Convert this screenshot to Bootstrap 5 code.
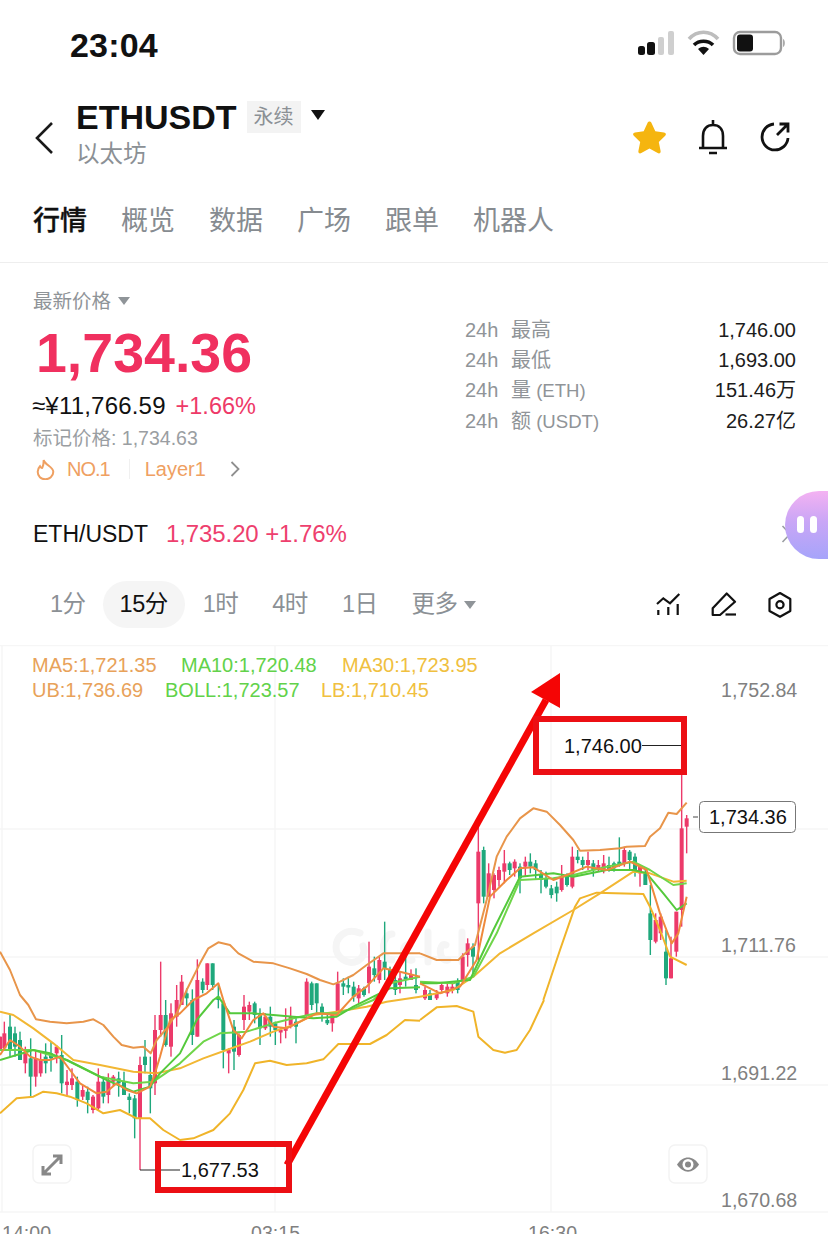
<!DOCTYPE html>
<html lang="zh-CN">
<head>
  <meta charset="UTF-8" />
  <meta name="viewport" content="width=device-width, initial-scale=1" />
  <title>ETHUSDT 永续</title>
  <link href="https://cdn.jsdelivr.net/npm/bootstrap@5.3.2/dist/css/bootstrap.min.css" rel="stylesheet" />
  <style>
    html, body { margin: 0; background: #fff; }
    body {
      width: 828px;
      height: 1234px;
      overflow: hidden;
      font-family: "Liberation Sans", "Noto Sans CJK SC", sans-serif;
      color: #111;
    }
    .status-bar { height: 90px; padding: 28px 43px 0 70px; }
    .status-time { font-size: 34px; font-weight: 700; line-height: 34px; letter-spacing: .2px; }
    .head-bar { height: 100px; padding: 10px 37px 0 35px; }
    .head-back { width: 41px; margin-top: 22px; }
    .head-name { font-size: 34px; font-weight: 700; line-height: 34px; }
    .head-sub { font-size: 23.5px; line-height: 30px; color: #8b9095; margin-top: 5px; }
    .head-tag {
      background: #f3f3f3; color: #8b9095; font-size: 20px; line-height: 32px;
      padding: 0 7px; margin: 1px 10px 0; height: 32px;
    }
    .head-tools { gap: 31px; margin-top: 20px; }
    .tab-bar { height: 73px; padding: 14px 0 0 33px; gap: 34px; border-bottom: 1px solid #eeeeee; }
    .tab-item { font-size: 27px; line-height: 34px; color: #868b90; }
    .tab-item.is-on { color: #111; font-weight: 500; -webkit-text-stroke: .3px #111; }
    .stats-wrap { padding: 24px 32px 0 33px; height: 222px; }
    .price-col { width: 432px; }
    .muted-label { font-size: 19.5px; line-height: 28px; color: #8f9498; }
    .tri-down { display: inline-block; border: 6px solid transparent; border-top: 8px solid #8f9498; border-bottom: 0; margin-left: 7px; vertical-align: 3px; }
    .price-big { font-size: 55.5px; font-weight: 700; line-height: 62px; color: #f0305f; margin: 7px 0 0 3px; }
    .price-cny { font-size: 24px; line-height: 26px; margin-top: 9px; margin-left: -1px; letter-spacing: .2px; }
    .up-pct { color: #ee3a68; margin-left: 3px; font-size: 23.5px; letter-spacing: 0; }
    .mark-line { font-size: 19.5px; line-height: 30px; color: #9a9ea2; margin-top: 4px; }
    .tag-line { font-size: 20px; line-height: 32px; color: #efa062; margin: 0 0 0 3px; }
    .tag-no { letter-spacing: -1px; }
    .tag-sep { width: 1px; height: 20px; background: #f0f0f0; margin: 0 15px 0 19px; }
    .stat-col { width: 331px; padding-top: 28px; }
    .stat-row { font-size: 20px; line-height: 30px; }
    .stat-key { color: #909498; }
    .stat-h { display: inline-block; width: 46px; }
    .stat-par { font-size: 18.6px; }
    .stat-val { color: #1c1c1c; }
    .spot-row { height: 40px; margin: 29px 0 0; padding-left: 33px; font-size: 23px; line-height: 40px; }
    .spot-up { color: #ee3f6e; margin-left: 18px; font-size: 24px; letter-spacing: -.1px; }
    .assist-blob {
      position: absolute; right: 0; top: 491px; width: 43px; height: 68px;
      border-radius: 34px 0 0 34px;
      background: linear-gradient(180deg, #f4b2f2 0%, #c9a6f6 45%, #a6a4fa 100%);
    }
    .assist-eye { position: absolute; top: 25px; width: 7px; height: 17px; border-radius: 4px; background: #fff; }
    .assist-arrow { position: absolute; left: 781px; top: 525px; }
    .time-row { height: 47px; margin-top: 27px; padding: 0 36px 0 33px; font-size: 23.5px; letter-spacing: -.5px; color: #8b9095; }
    .time-item { line-height: 47px; padding: 0 17px; }
    .time-item.is-on { background: #f5f5f5; color: #111; border-radius: 24px; margin-right: 1px; }
    .time-icons { gap: 30px; }
    .chart-wrap { position: relative; width: 828px; height: 589px; margin-top: 17px; overflow: hidden; }
    .chart-wrap svg { display: block; }
    .chart-text { font-family: "Liberation Sans", sans-serif; font-size: 20px; }
    .axis-text { font-size: 19.6px; }
  </style>
</head>
<body>

<div class="status-bar d-flex justify-content-between">
  <div class="status-time">23:04</div>
  <svg width="150" height="30" viewBox="635 30 150 30">
    <rect x="638" y="48" width="7" height="9" rx="2.500" fill="#111"/>
    <rect x="647" y="44" width="8" height="13" rx="2.500" fill="#111"/>
    <rect x="658" y="39" width="6" height="18" rx="2" fill="#cfcfcf"/>
    <rect x="668" y="33" width="6" height="24" rx="2" fill="#cfcfcf"/>
    <path d="M689 41 C697 32 710 32 718 41" fill="none" stroke="#bdbdbd" stroke-width="3.600"/>
    <path d="M694 47 C699 42 708 42 713 47" fill="none" stroke="#111" stroke-width="3.600"/>
    <path d="M698 51 C702 48 705 48 709 51 L703.500 57 Z" fill="#111"/>
    <rect x="734" y="34" width="47" height="22" rx="6" fill="none" stroke="#9c9c9c" stroke-width="2.400"/>
    <rect x="737" y="36.500" width="16" height="17" rx="3" fill="#111"/>
    <path d="M783 41 C785.500 42 785.500 48 783 49 Z" fill="#a9a9a9"/>
  </svg>
</div>

<div class="head-bar d-flex justify-content-between">
  <div class="d-flex">
    <svg class="head-back" width="41" height="32" viewBox="0 0 41 32"><path d="M17 1 L2 16 L17 31" fill="none" stroke="#1a1a1a" stroke-width="2.600"/></svg>
    <div>
      <div class="d-flex align-items-start">
        <span class="head-name">ETHUSDT</span>
        <span class="head-tag">永续</span>
        <svg class="mt-2" width="14" height="12" viewBox="0 0 14 12"><path d="M0 2 H14 L7 12 Z" fill="#111"/></svg>
      </div>
      <div class="head-sub">以太坊</div>
    </div>
  </div>
  <div class="head-tools d-flex align-items-start">
    <svg width="35" height="35" viewBox="0 0 35 35"><path d="M17.500 1.500 C18.500 1.500 19 2 19.500 3 L23.300 11.300 L32 12.400 C34 12.700 34.500 14.400 33.200 15.700 L26.800 21.900 L28.600 31 C29 33 27.400 34 25.700 33.100 L17.500 28.500 L9.300 33.100 C7.600 34 6 33 6.400 31 L8.200 21.900 L1.800 15.700 C.5 14.400 1 12.700 3 12.400 L11.700 11.300 L15.500 3 C16 2 16.500 1.500 17.500 1.500 Z" fill="#f5b50f"/></svg>
    <svg width="30" height="35" viewBox="0 0 30 35"><path d="M15 0 V5 M5 28 V16 C5 9 9 5 15 5 C21 5 25 9 25 16 V28 M1 28 H29 M11 33 H19" fill="none" stroke="#111" stroke-width="2.600"/></svg>
    <svg width="32" height="33" viewBox="760 121 32 33"><path d="M775 125 A13 13 0 1 0 789 139" fill="none" stroke="#111" stroke-width="2.800"/><path d="M778 136 L788 126 M780.500 125 H789 V133.500" fill="none" stroke="#111" stroke-width="2.800"/></svg>
  </div>
</div>

<div class="tab-bar d-flex">
  <div class="tab-item is-on">行情</div>
  <div class="tab-item">概览</div>
  <div class="tab-item">数据</div>
  <div class="tab-item">广场</div>
  <div class="tab-item">跟单</div>
  <div class="tab-item">机器人</div>
</div>

<div class="stats-wrap d-flex">
  <div class="price-col">
    <div class="muted-label">最新价格<span class="tri-down"></span></div>
    <div class="price-big">1,734.36</div>
    <div class="price-cny">≈¥11,766.59 <span class="up-pct">+1.66%</span></div>
    <div class="mark-line">标记价格: 1,734.63</div>
    <div class="tag-line d-flex align-items-center">
      <svg width="19" height="22" viewBox="15 7 19 22"><path d="M22.700 9 C23.300 13.500 32.300 16 32.300 20.700 C32.300 25.300 28.300 28.300 24.300 28.300 C20 28.300 16.700 25.300 16.700 20.700 C16.700 18.300 17.700 16.700 19 15.300 C19.700 16.700 20.700 17.300 21.300 16.700 C22.300 15 22.700 12.300 22.700 9 Z" fill="none" stroke="#efa062" stroke-width="2"/></svg>
      <span class="tag-no ms-2 ps-1">NO.1</span><span class="tag-sep"></span><span>Layer1</span>
      <svg class="ms-4" width="10" height="16" viewBox="0 0 10 16"><path d="M1.500 1 L8.500 8 L1.500 15" fill="none" stroke="#8f8f8f" stroke-width="1.800"/></svg>
    </div>
  </div>
  <div class="stat-col">
    <div class="stat-row d-flex justify-content-between"><span class="stat-key"><span class="stat-h">24h</span>最高</span><span class="stat-val">1,746.00</span></div>
    <div class="stat-row d-flex justify-content-between"><span class="stat-key"><span class="stat-h">24h</span>最低</span><span class="stat-val">1,693.00</span></div>
    <div class="stat-row d-flex justify-content-between"><span class="stat-key"><span class="stat-h">24h</span>量<span class="stat-par"> (ETH)</span></span><span class="stat-val">151.46万</span></div>
    <div class="stat-row d-flex justify-content-between"><span class="stat-key"><span class="stat-h">24h</span>额<span class="stat-par"> (USDT)</span></span><span class="stat-val">26.27亿</span></div>
  </div>
</div>

<div class="spot-row">ETH/USDT<span class="spot-up">1,735.20 +1.76%</span></div>
<svg class="assist-arrow" width="11" height="18" viewBox="0 0 11 18"><path d="M1.500 1 L9 9 L1.500 17" fill="none" stroke="#9a9ea2" stroke-width="1.600"/></svg>
<div class="assist-blob"><span class="assist-eye" style="left:12px"></span><span class="assist-eye" style="left:25px"></span></div>

<div class="time-row d-flex justify-content-between align-items-center">
  <div class="d-flex align-items-center">
    <span class="time-item">1分</span>
    <span class="time-item is-on">15分</span>
    <span class="time-item">1时</span>
    <span class="time-item">4时</span>
    <span class="time-item">1日</span>
    <span class="time-item">更多<span class="tri-down"></span></span>
  </div>
  <div class="time-icons d-flex align-items-center">
    <svg width="25" height="24" viewBox="16 13 25 24"><path d="M17 24 L23.300 18.300 L30 23.300 L39.300 14" fill="none" stroke="#111" stroke-width="2.200"/><path d="M18.300 30 V35 M28.300 27 V35 M37.700 24 V35" fill="none" stroke="#111" stroke-width="2.200"/></svg>
    <svg width="27" height="25" viewBox="71 12 27 25"><path d="M72.700 28.300 L86.700 13.500 L95 21.700 L80 35 H72.700 Z" fill="none" stroke="#111" stroke-width="2.200" stroke-linejoin="round"/><path d="M85.500 34.500 H96" fill="none" stroke="#111" stroke-width="2.200"/></svg>
    <svg width="24" height="28" viewBox="128 11 24 28"><path d="M140 13 L150.300 19 V31 L140 36.800 L129.500 31 V19 Z" fill="none" stroke="#111" stroke-width="2.200" stroke-linejoin="round"/><circle cx="140" cy="24.800" r="3.600" fill="none" stroke="#111" stroke-width="2.200"/></svg>
  </div>
</div>

<div class="chart-wrap">
  <svg id="chart" width="828" height="589" viewBox="0 645 828 589">
    <g stroke="#f6f6f6" stroke-width="1.500" fill="none">
      <path d="M0 645.500 H828 M0 829 H828 M0 957 H828 M0 1085 H828 M0 1212 H828 M2 645 V1212 M275 645 V1212 M551 645 V1212"/>
    </g>
    <g id="watermark" fill="none" stroke="#f5f5f5" stroke-width="7" stroke-linecap="round">
      <path d="M360 933 C345 927 336 938 336 947 C336 957 346 964 355 962 C362 960 366 953 363 946"/>
      <path d="M392 934 C382 934 379 958 392 960 M410 945 C400 942 402 962 412 960 M428 932 V962 M446 945 C438 942 438 962 448 960 M462 932 V962"/>
    </g>
    <g id="candles"></g>
    <g id="lines" fill="none" stroke-linejoin="round"></g>

    <g class="chart-text">
      <text x="32" y="672" fill="#e8a25a">MA5:1,721.35</text>
      <text x="181" y="672" fill="#62d24a">MA10:1,720.48</text>
      <text x="342" y="672" fill="#f0c040">MA30:1,723.95</text>
      <text x="32" y="697" fill="#e8a25a">UB:1,736.69</text>
      <text x="165" y="697" fill="#62d24a">BOLL:1,723.57</text>
      <text x="321" y="697" fill="#f0c040">LB:1,710.45</text>

      <g fill="#808080" class="axis-text">
        <text x="721" y="697">1,752.84</text>
        <text x="721" y="952">1,711.76</text>
        <text x="721" y="1080">1,691.22</text>
        <text x="721" y="1207">1,670.68</text>
        <text x="2" y="1240">14:00</text>
        <text x="251" y="1240">03:15</text>
        <text x="528" y="1240">16:30</text>
      </g>
    </g>

    <path d="M693 817 H698" stroke="#666" stroke-width="1.200"/>
    <rect x="699.500" y="801.500" width="96" height="31" rx="4" fill="#fff" stroke="#777" stroke-width="1"/>
    <text class="chart-text" x="709" y="824" fill="#111">1,734.36</text>

    <g fill="#fff" stroke="#f3f3f3" stroke-width="1.500">
      <rect x="33" y="1145" width="38" height="38" rx="6"/>
      <rect x="669" y="1145" width="38" height="38" rx="6"/>
    </g>
    <path d="M44 1173 L60 1157 M53 1156 H61 V1164 M43 1166 V1174 H51" fill="none" stroke="#888" stroke-width="3"/>
    <path d="M677 1164.500 C683 1155 693 1155 699 1164.500 C693 1174 683 1174 677 1164.500 Z" fill="#888"/>
    <circle cx="688" cy="1164.500" r="5.500" fill="#fff"/>
    <circle cx="688" cy="1164.500" r="3" fill="#888"/>

    <path d="M140 1170 H180 M642 745.500 H682" stroke="#222" stroke-width="1.200"/>
    <text class="chart-text" x="181" y="1177" fill="#111">1,677.53</text>
    <text class="chart-text" x="564" y="753" fill="#111">1,746.00</text>

    <path d="M287 1165 L546 700" stroke="#f50505" stroke-width="7" fill="none"/>
    <path d="M560 673 V708 L531 692 Z" fill="#f50505"/>
    <rect x="158" y="1144" width="131" height="46" fill="none" stroke="#ec0f14" stroke-width="6"/>
    <rect x="536" y="719" width="148" height="53" fill="none" stroke="#ec0f14" stroke-width="6"/>
  </svg>
</div>

<script>
// traced from the reference, left part (a) and right part (b) use their own origin
const ptA = (x, y) => [x / 3, 900 + y / 3];
const ptB = (x, y) => [420 + x / 3, 640 + y / 3];
const ptC = (x, y) => [420 + x / 3, 1000 + y / 3];

const seriesA = {
  ub: [[0,155],[30,210],[60,285],[85,315],[108,358],[150,365],[200,370],[250,365],[280,358],[310,375],[340,410],[365,435],[400,443],[430,440],[452,460],[470,420],[500,385],[530,340],[560,270],[600,190],[625,145],[655,127],[690,135],[715,160],[760,185],[820,190],[870,205],[920,222],[960,240],[1000,253],[1020,245],[1060,225],[1100,195],[1150,160],[1260,160]],
  ma5: [[0,465],[30,420],[60,440],[90,470],[120,480],[150,480],[180,470],[210,510],[240,550],[290,580],[320,575],[350,550],[380,570],[410,580],[450,560],[465,520],[480,470],[510,360],[540,340],[580,300],[620,280],[655,250],[670,300],[700,390],[725,415],[760,360],[790,340],[820,380],[860,385],[900,365],[950,340],[1010,345],[1060,290],[1100,260],[1150,205],[1200,215],[1260,230]],
  ma10: [[0,480],[50,465],[100,450],[150,460],[200,480],[260,510],[320,540],[400,575],[450,560],[480,520],[540,460],[590,360],[640,300],[655,290],[690,340],[760,340],[820,345],[880,350],[940,355],[1010,350],[1060,320],[1120,290],[1170,265],[1260,262]],
  boll: [[0,450],[100,450],[200,480],[300,530],[400,550],[460,545],[540,490],[610,425],[660,400],[740,395],[820,370],[880,355],[950,340],[1010,340],[1060,325],[1120,300],[1170,250],[1260,230]],
  ma30: [[0,335],[40,345],[100,385],[160,430],[220,480],[300,495],[400,515],[470,520],[540,505],[610,475],[680,450],[750,425],[820,395],[880,375],[940,345],[1010,335],[1100,320],[1160,305],[1260,290]],
  lb: [[0,640],[50,595],[100,590],[130,575],[170,580],[210,590],[260,610],[310,640],[360,630],[410,655],[450,655],[490,690],[540,720],[580,715],[640,690],[690,640],[730,570],[765,490],[810,482],[860,495],[920,490],[970,478],[1015,432],[1060,432],[1110,432],[1160,405],[1215,360],[1260,362]]
};
const seriesB = {
  ub: [[0,940],[50,960],[115,960],[130,945],[165,915],[200,780],[230,650],[260,590],[300,535],[340,505],[380,515],[420,555],[460,600],[480,632],[540,630],[600,625],[620,620],[675,618],[690,590],[720,565],[745,518],[770,522],[800,488]],
  ma5: [[0,1030],[60,1060],[120,1040],[170,960],[210,770],[260,720],[300,685],[340,682],[400,720],[440,705],[500,680],[560,690],[630,665],[680,690],[720,820],[755,910],[775,880],[800,770]],
  ma10: [[0,1030],[50,1030],[150,1020],[220,870],[300,710],[400,700],[460,710],[560,690],[640,690],[680,700],[730,760],[770,810],[800,790]],
  boll: [[0,1025],[100,1030],[160,1010],[230,880],[300,720],[400,715],[460,705],[560,680],[640,665],[690,690],[760,735],[800,730]],
  ma30: [[0,1070],[100,1050],[160,1010],[240,940],[340,880],[460,810],[540,760],[640,695],[690,700],[760,725],[800,722]],
  lb: [[370,1080],[420,930],[465,800],[480,775],[530,758],[670,762],[690,800],[720,870],[750,950],[800,975]]
};
const lbC = [[0,60],[50,22],[110,18],[160,35],[175,110],[220,150],[255,158],[290,150],[330,90],[372,0]];

// x, wick top, wick bottom, body top, body bottom, colour
const candlesA = [
  [0,410,450,410,450,'r'],[13,365,450,400,445,'r'],[30,345,470,380,450,'g'],[45,380,470,400,440,'g'],[60,395,480,420,480,'g'],
  [76,440,520,460,490,'r'],[92,415,590,475,530,'g'],[107,450,560,475,530,'r'],[122,455,530,480,520,'r'],[137,430,520,470,490,'g'],
  [153,425,515,460,475,'g'],[170,435,490,440,460,'r'],[185,405,580,465,550,'g'],[201,510,590,545,555,'r'],[216,505,570,535,555,'r'],
  [232,530,620,545,600,'g'],[248,555,600,570,590,'r'],[263,560,640,575,600,'g'],[279,585,640,590,630,'r'],[295,505,630,545,625,'r'],
  [310,530,610,545,590,'g'],[325,520,610,540,585,'r'],[340,525,560,530,545,'r'],[356,515,590,535,550,'g'],[372,515,585,545,585,'g'],
  [388,580,640,590,600,'g'],[404,585,715,595,655,'g'],[420,470,810,495,655,'r'],[435,420,520,470,495,'g'],[451,470,640,525,565,'g'],
  [465,345,585,390,550,'r'],[482,185,410,345,390,'r'],[497,300,440,345,435,'g'],[513,310,470,340,440,'r'],[530,255,380,300,350,'r'],
  [545,225,315,245,315,'r'],[560,265,320,280,295,'g'],[577,268,435,300,405,'g'],[592,178,410,240,410,'r'],[608,235,280,245,270,'g'],
  [622,190,270,190,255,'r'],[638,190,270,190,255,'g'],[655,250,325,290,300,'g'],[670,300,505,310,450,'g'],[686,445,520,450,460,'r'],
  [702,360,510,380,455,'g'],[717,400,470,405,465,'r'],[732,285,390,320,360,'r'],[748,305,360,315,335,'r'],[764,305,370,310,345,'g'],
  [780,325,435,345,385,'g'],[796,340,390,350,385,'r'],[811,320,410,350,380,'g'],[826,365,435,370,390,'g'],[842,385,430,395,390,'r'],
  [857,325,415,385,390,'r'],[872,320,385,350,375,'r'],[888,350,430,365,380,'g'],[920,235,350,245,345,'r'],[935,245,330,250,315,'g'],
  [950,250,345,250,310,'g'],[966,310,365,320,340,'g'],[982,345,375,360,370,'g'],[997,340,395,345,370,'r'],[1013,215,350,250,340,'r'],
  [1030,235,285,260,250,'g'],[1045,230,280,255,260,'g'],[1061,245,305,260,290,'g'],[1076,255,310,265,295,'r'],[1092,260,290,265,285,'g'],
  [1107,125,280,200,250,'r'],[1123,170,245,205,225,'g'],[1138,170,250,180,240,'r'],[1154,65,240,185,205,'g'],[1170,200,245,210,240,'g'],
  [1186,225,285,240,270,'g'],[1200,215,280,235,255,'r'],[1217,170,260,235,230,'g'],[1233,208,240,225,240,'r'],[1248,205,280,255,270,'g']
];
const candlesB = [
  [15,1040,1080,1050,1075,'r'],[30,1050,1080,1060,1080,'g'],[50,1050,1080,1060,1075,'r'],[65,1030,1060,1035,1050,'r'],[82,1030,1070,1040,1060,'r'],
  [97,1030,1060,1040,1050,'r'],[113,1015,1060,1025,1050,'g'],[128,940,1030,950,1020,'r'],[143,895,980,910,945,'r'],[159,910,1000,920,950,'g'],
  [175,560,960,635,790,'r'],[191,620,790,630,770,'g'],[206,670,770,700,770,'r'],[222,700,775,705,750,'r'],[237,680,740,690,720,'r'],
  [253,630,730,670,695,'r'],[269,665,705,670,690,'g'],[284,658,710,665,685,'r'],[300,670,760,680,715,'g'],[316,650,710,665,680,'r'],
  [331,640,700,665,680,'g'],[347,660,720,670,690,'g'],[363,690,760,705,720,'g'],[378,695,745,715,740,'g'],[394,735,775,745,765,'g'],
  [410,725,785,740,760,'g'],[425,675,755,710,750,'r'],[441,700,740,705,735,'g'],[457,620,745,650,740,'r'],[473,630,670,650,660,'g'],
  [488,650,690,660,675,'g'],[504,635,690,660,675,'r'],[520,660,710,670,690,'g'],[535,660,695,675,690,'r'],[551,645,700,670,690,'r'],
  [567,650,695,675,690,'g'],[582,665,695,670,685,'g'],[598,592,680,670,665,'g'],[613,620,680,630,670,'r'],[629,630,690,635,660,'g'],
  [645,640,710,650,690,'g'],[660,675,740,680,700,'r'],[676,690,735,700,735,'g'],[691,735,945,820,900,'g'],[707,820,910,840,905,'r'],
  [722,820,900,830,880,'r'],[738,870,1035,935,1015,'g'],[753,890,1015,955,1015,'r'],[769,815,950,815,935,'r'],[785,316,860,565,810,'r'],[800,525,640,535,560,'r']
];

const NS = 'http://www.w3.org/2000/svg';
const candleColors = { r: '#ec3a6a', g: '#1fa87c' };
const candleLayer = document.getElementById('candles');
const lineLayer = document.getElementById('lines');

function addCandle(row, toPage) {
  const [zx, wt, wb, bt, bb, c] = row;
  const [x, wickTop] = toPage(zx, wt);
  const wickBot = toPage(zx, wb)[1];
  const a = toPage(zx, Math.min(bt, bb))[1];
  const b = toPage(zx, Math.max(bt, bb))[1];
  const wick = document.createElementNS(NS, 'rect');
  wick.setAttribute('x', x - 0.7);
  wick.setAttribute('y', wickTop);
  wick.setAttribute('width', 1.4);
  wick.setAttribute('height', wickBot - wickTop);
  wick.setAttribute('fill', candleColors[c]);
  candleLayer.appendChild(wick);
  const body = document.createElementNS(NS, 'rect');
  body.setAttribute('x', x - 2);
  body.setAttribute('y', a);
  body.setAttribute('width', 4);
  body.setAttribute('height', Math.max(b - a, 2.5));
  body.setAttribute('fill', candleColors[c]);
  candleLayer.appendChild(body);
}

function addLine(points, color, width) {
  const line = document.createElementNS(NS, 'polyline');
  line.setAttribute('points', points.map(p => p.join(',')).join(' '));
  line.setAttribute('stroke', color);
  line.setAttribute('stroke-width', width);
  lineLayer.appendChild(line);
}

candlesA.forEach(c => addCandle(c, ptA));
candlesB.forEach(c => addCandle(c, ptB));

const lineStyle = {
  lb: ['#f0b429', 2], ma30: ['#f2b733', 2], ub: ['#e8954a', 2],
  boll: ['#6fd54a', 2], ma10: ['#54c93c', 2], ma5: ['#ef8a3c', 2]
};
Object.keys(lineStyle).forEach(k => {
  const [color, w] = lineStyle[k];
  addLine(seriesA[k].map(p => ptA(p[0], p[1])), color, w);
  addLine(seriesB[k].map(p => ptB(p[0], p[1])), color, w);
});
addLine(lbC.map(p => ptC(p[0], p[1])), lineStyle.lb[0], lineStyle.lb[1]);
</script>
<script src="https://cdn.jsdelivr.net/npm/bootstrap@5.3.2/dist/js/bootstrap.bundle.min.js"></script>
</body>
</html>
